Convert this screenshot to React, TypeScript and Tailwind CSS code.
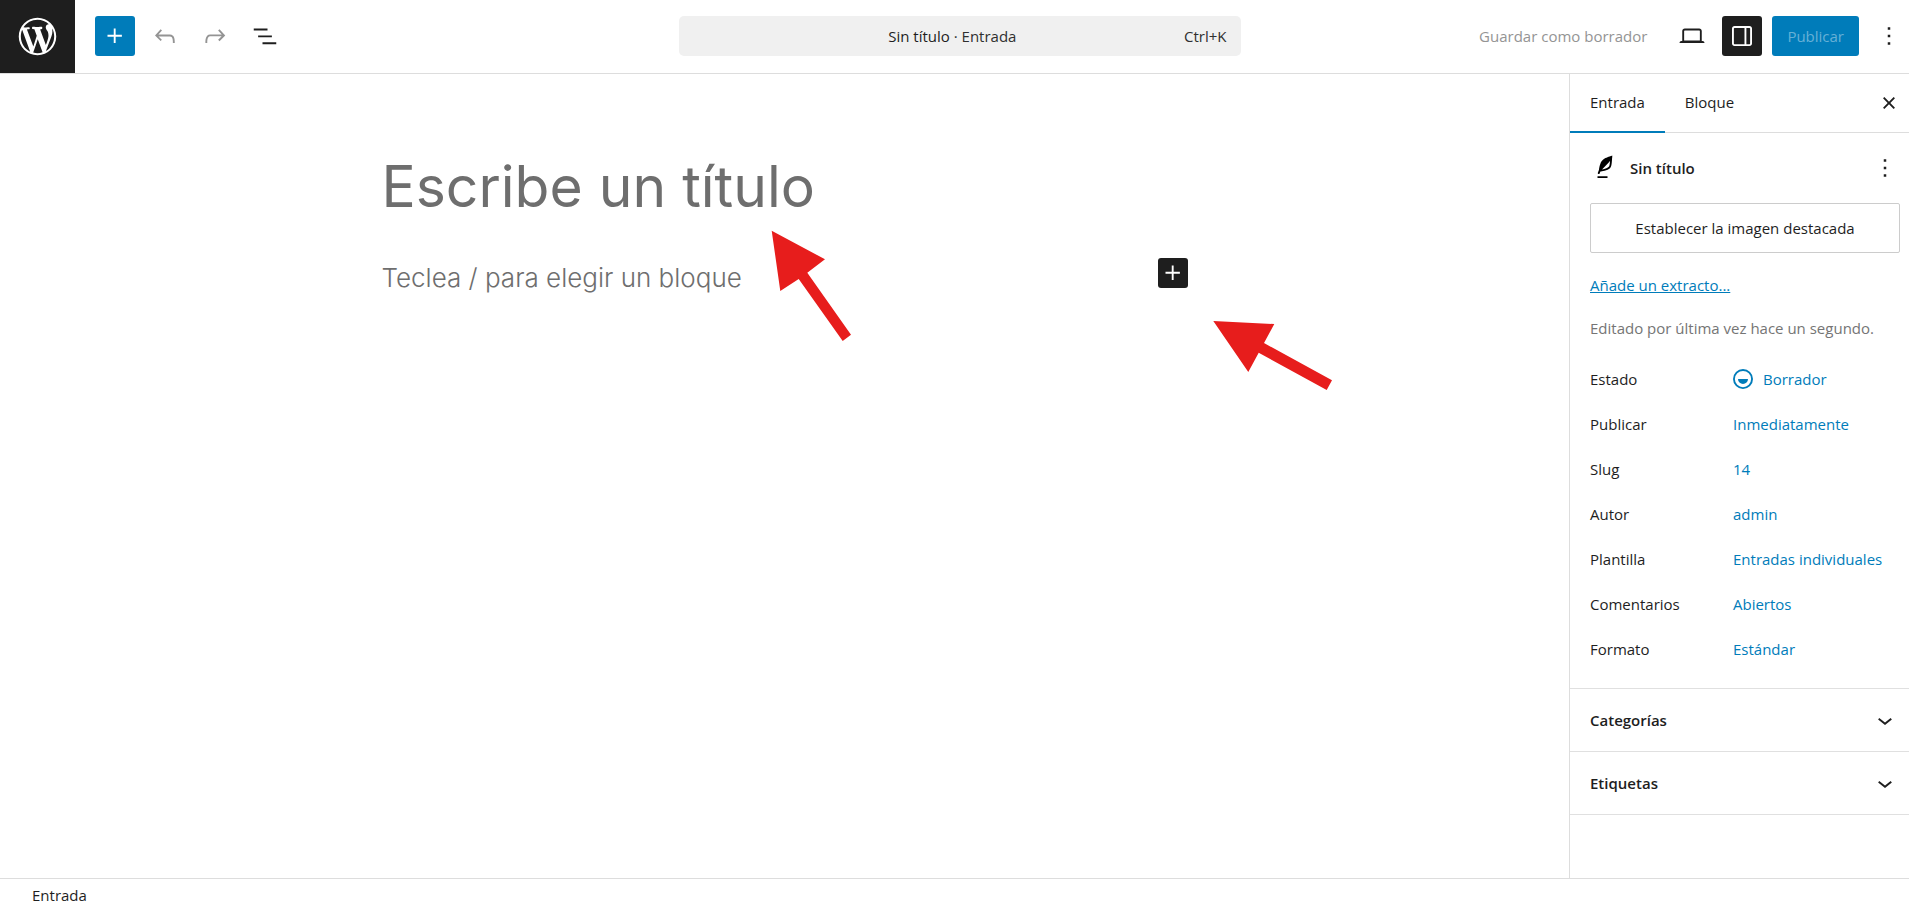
import React, { useState } from "react";
import clsx from "clsx";

const ICONS = {
  wordpress:
    "M20 10c0-5.51-4.49-10-10-10C4.48 0 0 4.49 0 10c0 5.52 4.48 10 10 10 5.51 0 10-4.48 10-10zM7.78 15.37L4.37 6.22c.55-.02 1.17-.08 1.17-.08.5-.06.44-1.13-.06-1.11 0 0-1.45.11-2.37.11-.18 0-.37 0-.58-.01C4.12 2.69 6.87 1.11 10 1.11c2.33 0 4.45.87 6.05 2.34-.68-.11-1.65.39-1.65 1.58 0 .74.45 1.36.9 2.1.35.61.55 1.36.55 2.46 0 1.49-1.4 5-1.4 5l-3.03-8.37c.54-.02.82-.17.82-.17.5-.05.44-1.25-.06-1.22 0 0-1.44.12-2.38.12-.87 0-2.33-.12-2.33-.12-.5-.03-.56 1.2-.06 1.22l.92.08 1.26 3.41zM17.41 10c.24-.64.74-1.87.43-4.25.7 1.29 1.05 2.71 1.05 4.25 0 3.29-1.73 6.24-4.4 7.78.97-2.59 1.94-5.2 2.92-7.78zM6.1 18.09C3.12 16.65 1.11 13.53 1.11 10c0-1.3.23-2.48.72-3.59C3.25 10.3 4.67 14.2 6.1 18.09zm4.03-6.63l2.58 6.98c-.86.29-1.76.45-2.71.45-.79 0-1.57-.11-2.29-.33.81-2.38 1.62-4.74 2.42-7.1z",
  plus: "M11 12.5V17.5H12.5V12.5H17.5V11H12.5V6H11V11H6V12.5H11Z",
  undo: "M18.3 11.7c-.6-.6-1.4-.9-2.3-.9H6.7l2.9-3.3-1.1-1-4.5 5L8.5 16l1-1-2.7-2.7H16c.5 0 .9.2 1.3.5 1 1 1 3.4 1 4.5v.3h1.5v-.2c0-1.5 0-4.3-1.5-5.7z",
  redo: "M15.6 6.5l-1.1 1 2.9 3.3H8c-.9 0-1.7.3-2.3.9-1.4 1.5-1.4 4.2-1.4 5.6v.2h1.5v-.3c0-1.1 0-3.5 1-4.5.3-.3.7-.5 1.3-.5h9.2L14.5 15l1.1 1.1 4.6-4.6-4.6-5z",
  listView: "M3 6h11v1.5H3V6Zm3.5 5.5h11V13h-11v-1.5ZM21 17H10v1.5h11V17Z",
  desktop:
    "M20.5 16h-.7V8c0-1.1-.9-2-2-2H6.2c-1.1 0-2 .9-2 2v8h-.7c-.8 0-1.5.7-1.5 1.5h20c0-.8-.7-1.5-1.5-1.5zM5.7 8c0-.3.2-.5.5-.5h11.6c.3 0 .5.2.5.5v7.6H5.7V8z",
  drawer:
    "M18 4H6c-1.1 0-2 .9-2 2v12c0 1.1.9 2 2 2h12c1.1 0 2-.9 2-2V6c0-1.1-.9-2-2-2zm-4 14.5H6c-.3 0-.5-.2-.5-.5V6c0-.3.2-.5.5-.5h8v13zm4.5-.5c0 .3-.2.5-.5.5h-2.5v-13H18c.3 0 .5.2.5.5v12z",
  more: "M13 19h-2v-2h2v2zm0-6h-2v-2h2v2zm0-6h-2V5h2v2z",
  close:
    "M12 13.06l3.712 3.713 1.061-1.06L13.061 12l3.712-3.712-1.06-1.06L12 10.938 8.288 7.227l-1.061 1.06L10.939 12l-3.712 3.712 1.06 1.061L12 13.061z",
  chevron: "M17.5 11.6L12 16l-5.5-4.4.9-1.2L12 14l4.5-3.6 1 1.2z",
  quill:
    "M17.8 2l-.9.3c-.1 0-3.6 1-5.2 2.1C10 5.5 9.3 6.5 8.9 7.1c-.6.9-1.7 4.7-1.7 6.3l-.9 2.3c-.2.4 0 .8.4 1 .1 0 .2.1.3.1.3 0 .6-.2.7-.5l.6-1.5c.3 0 .7-.1 1.2-.2.7-.1 1.4-.3 2.2-.5.8-.2 1.6-.5 2.4-.8.7-.3 1.4-.7 1.9-1.2s.8-1.2 1-1.9c.2-.7.3-1.6.4-2.4.1-.8.1-1.7.2-2.5 0-.8.1-1.5.2-2.1V2zm-1.9 5.6c-.1.8-.2 1.5-.3 2.1-.2.6-.4 1-.6 1.3-.3.3-.8.6-1.4.9-.7.3-1.4.5-2.2.8-.6.2-1.3.3-1.8.4L15 7.5c.3-.3.6-.7 1-1.1 0 .4 0 .8-.1 1.2zM6 20h8v-1.5H6V20z",
  draft:
    "M12 18.5a6.5 6.5 0 1 1 0-13 6.5 6.5 0 0 1 0 13ZM4 12a8 8 0 1 1 16 0 8 8 0 0 1-16 0Zm8 4a4 4 0 0 0 4-4H8a4 4 0 0 0 4 4Z",
};

interface IconProps {
  name: keyof typeof ICONS;
  className?: string;
  viewBox?: string;
}

const Icon: React.FC<IconProps> = ({ name, className = "size-[30px]", viewBox = "0 0 24 24" }) => (
  <svg viewBox={viewBox} className={clsx("shrink-0 fill-current", className)} aria-hidden="true">
    <path d={ICONS[name]} fillRule="evenodd" clipRule="evenodd" />
  </svg>
);

interface IconButtonProps {
  icon: keyof typeof ICONS;
  label: string;
  className?: string;
  disabled?: boolean;
  onClick?: () => void;
}

const IconButton: React.FC<IconButtonProps> = ({ icon, label, className, disabled, onClick }) => (
  <button
    type="button"
    aria-label={label}
    disabled={disabled}
    onClick={onClick}
    className={clsx("flex size-10 shrink-0 items-center justify-center rounded-[3px]", className)}
  >
    <Icon name={icon} />
  </button>
);

const Header = ({ sidebarOpen, onToggle }: { sidebarOpen: boolean; onToggle: () => void }) => (
  <header className="flex h-[74px] shrink-0 border-b border-[#ddd]">
    <a href="#entradas" aria-label="Ver entradas" className="flex w-[75px] shrink-0 items-center justify-center bg-[#1e1e1e] text-white">
      <Icon name="wordpress" viewBox="-2 -2 24 24" className="size-[45px]" />
    </a>
    <div className="flex flex-1 items-start pt-4">
      <div className="flex gap-[10px] pl-5">
        <IconButton icon="plus" label="Insertar bloque" className="bg-[#007cba] text-white" />
        <IconButton icon="undo" label="Deshacer" className="text-[#949494]" disabled />
        <IconButton icon="redo" label="Rehacer" className="text-[#949494]" disabled />
        <IconButton icon="listView" label="Resumen del documento" />
      </div>
      <div className="flex flex-1 justify-center pl-[170px]">
        <button type="button" className="flex h-10 w-[562px] items-center rounded-[5px] bg-[#f0f0f0] px-[14px]">
          <span className="flex-1 pl-7 text-center">
            Sin título <span className="text-[#2f2f2f]">· Entrada</span>
          </span>
          <kbd className="font-[inherit] text-[#2f2f2f]">Ctrl+K</kbd>
        </button>
      </div>
      <div className="flex gap-[10px]">
        <button type="button" disabled className="h-10 px-[15px] text-[#949494]">
          Guardar como borrador
        </button>
        <div className="flex gap-[10px]">
          <IconButton icon="desktop" label="Ver" />
          <IconButton
            icon="drawer"
            label="Ajustes"
            className={sidebarOpen ? "bg-[#1e1e1e] text-white" : "text-[#1e1e1e]"}
            onClick={onToggle}
          />
          <button type="button" disabled className="h-10 rounded-[3px] bg-[#007cba] px-[15px] text-[#66b0d6]">
            Publicar
          </button>
          <IconButton icon="more" label="Opciones" />
        </div>
      </div>
    </div>
  </header>
);

const Editor = () => (
  <main className="min-w-0 flex-1 px-4">
    <div className="relative mx-auto max-w-[806px] pt-[72px]">
      <input
        type="text"
        aria-label="Añadir título"
        placeholder="Escribe un título"
        className="block h-20 w-full font-[Inter,sans-serif] text-[57px] text-[#1e1e1e] outline-none placeholder:text-[#6e6e6e]"
      />
      <div className="flex items-start pt-8">
        <input
          type="text"
          aria-label="Bloque vacío"
          placeholder="Teclea / para elegir un bloque"
          className="h-[38px] min-w-0 flex-1 font-[Inter,sans-serif] text-[26px] font-light text-[#1e1e1e] outline-none placeholder:text-[#6e6e6e]"
        />
        <button
          type="button"
          aria-label="Añadir bloque"
          className="flex size-[30px] items-center justify-center rounded-[3px] bg-[#1e1e1e] text-white"
        >
          <Icon name="plus" />
        </button>
      </div>

      {/* Red pointers over the canvas */}
      <svg viewBox="0 0 80 111" className="pointer-events-none absolute top-[156px] left-[389px] h-[111px] w-20 fill-[#e71d1c]" aria-hidden="true">
        <path d="M.7 .7 54 29.3 36.3 42.7 80 104.7 71.7 111 27.7 49 9.3 61Z" />
      </svg>
      <svg viewBox="0 0 120 70" className="pointer-events-none absolute top-[247px] left-[831px] h-[70px] w-[120px] fill-[#e71d1c]" aria-hidden="true">
        <path d="M.3 0 61.3 3 51 22 119 59.3 113.7 69 45.7 31.7 35.3 51Z" />
      </svg>
    </div>
  </main>
);

const summary = [
  { label: "Estado", value: "Borrador", draft: true },
  { label: "Publicar", value: "Inmediatamente" },
  { label: "Slug", value: "14" },
  { label: "Autor", value: "admin" },
  { label: "Plantilla", value: "Entradas individuales" },
  { label: "Comentarios", value: "Abiertos" },
  { label: "Formato", value: "Estándar" },
];

const Sidebar = ({ onClose }: { onClose: () => void }) => {
  const [tab, setTab] = useState("Entrada");

  return (
    <aside className="w-[340px] shrink-0 border-l border-[#ddd]">
      <div className="flex h-[59px] items-center border-b border-[#ddd]">
        <div role="tablist" className="flex flex-1">
          {["Entrada", "Bloque"].map((name) => (
            <button
              key={name}
              type="button"
              role="tab"
              aria-selected={tab === name}
              onClick={() => setTab(name)}
              className={clsx("h-[59px] border-b-2 px-5", tab === name ? "border-[#007cba]" : "border-transparent")}
            >
              {name}
            </button>
          ))}
        </div>
        <IconButton icon="close" label="Cerrar ajustes" onClick={onClose} />
      </div>

      <div className="pt-5 pr-[9px] pb-[19px] pl-5">
        <div className="flex items-center">
          <Icon name="quill" className="size-[30px] text-black" />
          <h2 className="flex-1 pl-[10px] font-semibold">Sin título</h2>
          <button type="button" aria-label="Acciones">
            <Icon name="more" />
          </button>
        </div>
        <button type="button" className="mt-5 h-[50px] w-full rounded-[2px] border border-[#ccc]">
          Establecer la imagen destacada
        </button>
        <div className="pt-5">
          <a href="#extracto" className="text-[#007cba] underline">
            Añade un extracto...
          </a>
        </div>
        <p className="py-[19px] text-[#757575]">Editado por última vez hace un segundo.</p>
        <dl className="flex flex-col gap-[5px]">
          {summary.map(({ label, value, draft }) => (
            <div key={label} className="flex h-10 items-center">
              <dt className="w-[143px]">{label}</dt>
              <dd>
                <button type="button" className="flex items-center gap-[10px] text-[#007cba]">
                  {draft && <Icon name="draft" viewBox="4 4 16 16" className="size-5" />}
                  {value}
                </button>
              </dd>
            </div>
          ))}
        </dl>
      </div>

      {["Categorías", "Etiquetas"].map((name) => (
        <h2 key={name} className="border-t border-[#e0e0e0] last:border-b">
          <button type="button" aria-expanded="false" className="flex h-[62px] w-full items-center justify-between pr-[9px] pl-5 font-semibold">
            {name}
            <Icon name="chevron" />
          </button>
        </h2>
      ))}
    </aside>
  );
};

export default function App() {
  const [sidebarOpen, setSidebarOpen] = useState(true);

  return (
    <div className="flex min-h-screen flex-col bg-white font-['Open_Sans','Noto_Sans',sans-serif] text-[15px] leading-6 text-[#1e1e1e]">
      <Header sidebarOpen={sidebarOpen} onToggle={() => setSidebarOpen(!sidebarOpen)} />
      <div className="flex flex-1">
        <Editor />
        {sidebarOpen && <Sidebar onClose={() => setSidebarOpen(false)} />}
      </div>
      <footer className="h-[30px] shrink-0 border-t border-[#ddd] pt-1 pl-8">Entrada</footer>
    </div>
  );
}
